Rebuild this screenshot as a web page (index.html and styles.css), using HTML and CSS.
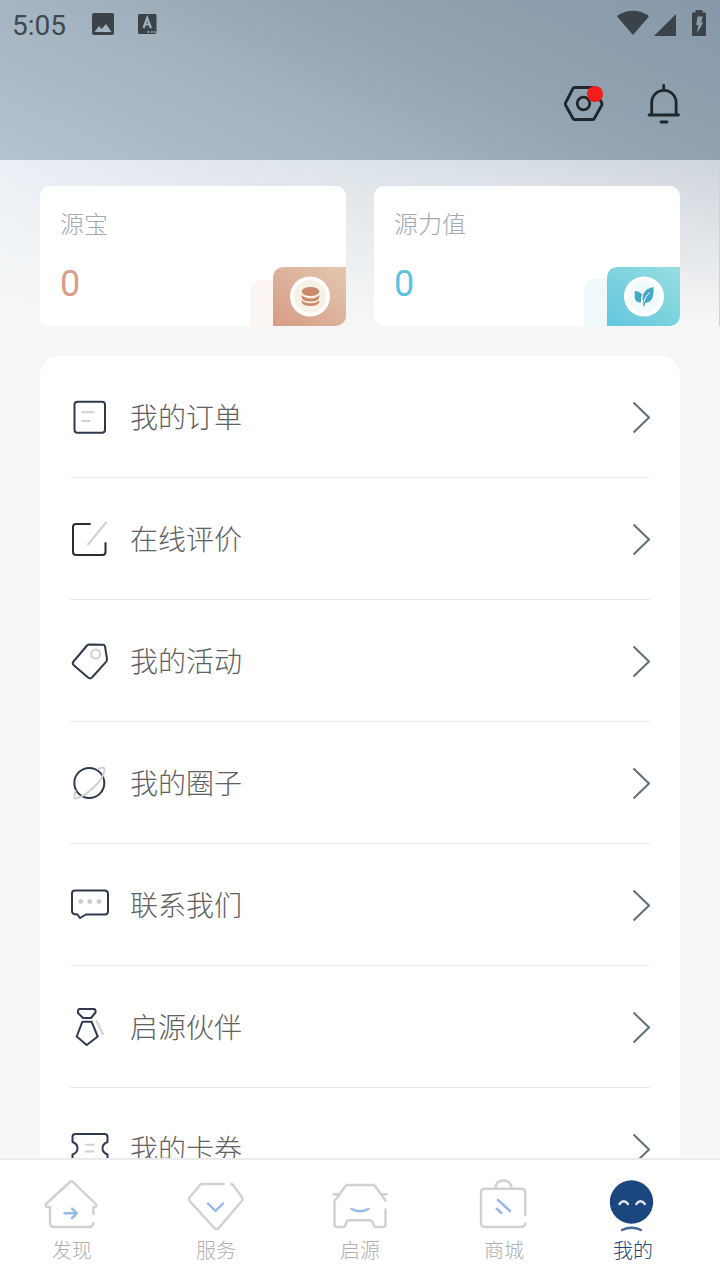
FILE: index.html
```html
<!DOCTYPE html>
<html lang="zh-CN">
    <head>
        <meta charset="utf-8">
        <title>我的</title>
        <link rel="stylesheet" href="styles.css">
    </head>
    <body>
        <header class="top">
            <div class="status">
                <span class="time">5:05</span>
                <svg class="status-left" width="68" height="26" viewBox="0 0 68 26">
                    <path fill-rule="evenodd" d="M3 1h18q2 0 2 2v18q0 2-2 2H3q-2 0-2-2V3q0-2 2-2zM3.500 20h17l-5.500-8-4.500 5-2.500-3z"/>
                    <rect x="47" y="2" width="18.500" height="20" rx="1.500"/>
                    <path class="cut" d="M52.500 16l3.700-10 3.700 10M53.500 12.500h5"/>
                    <path class="dots" d="M56.500 20h2M60 20h2M63 20h2"/>
                </svg>
                <svg class="status-right" width="92" height="30" viewBox="0 0 92 30">
                    <path d="M17 27L1.500 9q-.5-1.200.7-2Q17-1.500 31.800 7q1.200.8.700 2zM38.500 27.500L60 6v21.500q0 .5-.5.500H39q-1 0-.5-.5z"/>
                    <path d="M79.500 2h7v2.500H89q1 0 1 1V27q0 1-1 1H77q-1 0-1-1V5.500q0-1 1-1h2.500z"/>
                    <path class="bolt" d="M81.500 8.500h5.200l-1.500 6h2L81 25.500l1.200-8.500h-2z"/>
                </svg>
            </div>
            <div class="actions">
                <svg width="44" height="44" viewBox="0 0 44 44">
                    <path d="M12.500 5.500h18.300q1 0 1.500 1L39.800 21q.5 1 0 2l-7.500 13.500q-.5 1-1.500 1H12.500q-1 0-1.500-1L3.500 23q-.5-1 0-2L11 6.500q.5-1 1.500-1z"/>
                    <circle cx="21.500" cy="21.500" r="6.300"/>
                    <circle class="badge" cx="33" cy="12" r="8"/>
                </svg>
                <svg width="44" height="44" viewBox="0 0 44 44">
                    <path d="M9.700 32V20.500a12.200 12.200 0 0 1 24.400 0V32M7 33h29.500M21.700 3.500V8M19 40h6"/>
                </svg>
            </div>
        </header>

        <main class="content">
            <section class="stats">
                <div class="stat gold">
                    <p class="stat-name">源宝</p>
                    <p class="stat-num">0</p>
                    <svg class="stat-icon" width="96" height="60" viewBox="0 0 96 60">
                        <defs>
                            <linearGradient id="goldFill" x1="0" y1="1" x2="1" y2="0">
                                <stop offset="0" stop-color="#d69b86"/>
                                <stop offset="1" stop-color="#e3c8ae"/>
                            </linearGradient>
                        </defs>
                        <path fill="#fbf5f3" d="M0 60V27q0-13 13-13h20v46z"/>
                        <path fill="url(#goldFill)" d="M23 60V13Q23 1 35 1h61v59z"/>
                        <circle cx="60" cy="30.500" r="20" fill="#fff"/>
                        <circle cx="60" cy="30.500" r="16.300" fill="#f8f1e6"/>
                        <g fill="#cb8a6c">
                            <ellipse cx="60.500" cy="25.500" rx="8.800" ry="4.600"/>
                            <path d="M51.700 29q3 3.400 8.800 3.400t8.800-3.400v2.500q-1 4-8.800 4t-8.800-4zM51.700 34.200q3 3 8.800 3t8.800-3V36q-1 4-8.800 4t-8.800-4z"/>
                        </g>
                    </svg>
                </div>
                <div class="stat teal">
                    <p class="stat-name">源力值</p>
                    <p class="stat-num">0</p>
                    <svg class="stat-icon" width="96" height="60" viewBox="0 0 96 60">
                        <defs>
                            <linearGradient id="tealFill" x1="0" y1="1" x2="1" y2="0">
                                <stop offset="0" stop-color="#61c6de"/>
                                <stop offset="1" stop-color="#97dfe0"/>
                            </linearGradient>
                        </defs>
                        <path fill="#eff9fc" d="M0 60V26q0-13 13-13h20v47z"/>
                        <path fill="url(#tealFill)" d="M23 60V13Q23 1 35 1h61v59z"/>
                        <circle cx="60" cy="30.500" r="20" fill="#fff"/>
                        <circle cx="60" cy="30.500" r="16.300" fill="#f1fafd"/>
                        <path fill="#43a9c6" d="M50.700 25q5 .3 7.300 3.300-1.500 4-1 8.200-6.500 0-6.300-6zM69.500 21q1 16-8.500 15.800l-.7 3.400h-1.300l.3-3.700Q56 24 69.500 21z"/>
                        <path fill="none" stroke="#f1fafd" stroke-width="1" d="M60 36q1-6.500 6-9.500"/>
                    </svg>
                </div>
            </section>

            <ul class="menu">
                <li>
                    <svg class="icon" viewBox="0 0 40 40">
                        <rect x="4.500" y="4.800" width="30.500" height="31" rx="3"/>
                        <path class="soft" d="M12 15.200h11.500M12 24h7.500"/>
                    </svg>
                    <span>我的订单</span>
                    <svg class="arrow" viewBox="0 0 20 34"><path d="M3.500 2.500L19 17.500l-15.500 15"/></svg>
                </li>
                <li>
                    <svg class="icon black" viewBox="0 0 40 40">
                        <path d="M20 5H6Q3 5 3 8v25q0 3 3 3h26.500q3 0 3-3v-9"/>
                        <path class="soft" d="M36 3.500l-18 22"/>
                    </svg>
                    <span>在线评价</span>
                    <svg class="arrow" viewBox="0 0 20 34"><path d="M3.500 2.500L19 17.500l-15.500 15"/></svg>
                </li>
                <li>
                    <svg class="icon" viewBox="0 0 40 40">
                        <path d="M17 4.500q1-1 2.500-1l13.500.3q1.500 0 2 1.500L37 18q.2 1.500-.7 2.700L22 36.500q-2 1.700-4 0L3.500 24q-1.500-1.700 0-3.500z"/>
                        <circle class="soft" cx="25.700" cy="13" r="4.500"/>
                    </svg>
                    <span>我的活动</span>
                    <svg class="arrow" viewBox="0 0 20 34"><path d="M3.500 2.500L19 17.500l-15.500 15"/></svg>
                </li>
                <li>
                    <svg class="icon" viewBox="0 0 40 40">
                        <circle cx="19.300" cy="20" r="15"/>
                        <path class="soft" d="M28 6q7-3 6.500 1-.5 7-9 15.500Q14 34 6 35.500q-3 0-.5-7.500"/>
                    </svg>
                    <span>我的圈子</span>
                    <svg class="arrow" viewBox="0 0 20 34"><path d="M3.500 2.500L19 17.500l-15.500 15"/></svg>
                </li>
                <li>
                    <svg class="icon" viewBox="0 0 40 40">
                        <path d="M5 5.500h29.500q3.500 0 3.500 3.500v17q0 3.500-3.500 3.500H16L10 33l-2.500-3.500Q2 29.500 2 26V8.500q0-3 3-3z"/>
                        <g class="dot">
                            <circle cx="10.700" cy="16.500" r="2.400"/>
                            <circle cx="19.700" cy="16.500" r="2.400"/>
                            <circle cx="29" cy="16.500" r="2.400"/>
                        </g>
                    </svg>
                    <span>联系我们</span>
                    <svg class="arrow" viewBox="0 0 20 34"><path d="M3.500 2.500L19 17.500l-15.500 15"/></svg>
                </li>
                <li>
                    <svg class="icon" viewBox="0 0 40 40">
                        <path d="M10 2h13.500q2 0 2 2v1.500L21 11h-8L8 6V4q0-2 2-2zM12.300 14.800h9.400l6 14.700-11 8.500-10-8.500z"/>
                        <path class="soft" d="M26.500 14L33 27"/>
                    </svg>
                    <span>启源伙伴</span>
                    <svg class="arrow" viewBox="0 0 20 34"><path d="M3.500 2.500L19 17.500l-15.500 15"/></svg>
                </li>
                <li>
                    <svg class="icon" viewBox="0 0 40 40">
                        <path d="M5.500 5h29q3 0 3 3v5q-5 2-5 6.200t5 6.300v7q0 3-3 3h-29q-3 0-3-3v-7q5-2 5-6.300T2.500 13V8q0-3 3-3z"/>
                        <path class="soft" d="M16 15.800h7.800M16 22.600h7.800"/>
                    </svg>
                    <span>我的卡券</span>
                    <svg class="arrow" viewBox="0 0 20 34"><path d="M3.500 2.500L19 17.500l-15.500 15"/></svg>
                </li>
            </ul>
        </main>

        <nav class="tabs">
            <a class="tab">
                <svg viewBox="0 0 60 60">
                    <path d="M51.300 39v-7h1.500q2.500-1 1-3L31 7q-1.500-1.300-3 0L4 29q-1.500 2 1 3h3v16q0 4 4 4h35q4 0 4.500-4"/>
                    <path class="blue" d="M22.500 38.300h12M30 33.500l4.700 4.800-4.700 4.800"/>
                </svg>
                <span>发现</span>
            </a>
            <a class="tab">
                <svg viewBox="0 0 60 60">
                    <path d="M37.500 9H17q-2 0-3 1L3.500 22.500q-1 1.700 0 3.300l24.500 27q2.500 2.500 5 0l23-27q1.200-1.700 0-3.500L47.500 10.500q-.8-1-2.200-1.500"/>
                    <path class="blue" d="M22 28.500l7.500 7.500 7.500-7.500"/>
                </svg>
                <span>服务</span>
            </a>
            <a class="tab">
                <svg viewBox="0 0 60 60">
                    <path d="M55.500 25.500L45 11q-.7-1-2-1H17.500q-1.300 0-2 1L4.500 26v23.500q0 2.500 2.500 2.500h6q2 0 2.500-2l1-3q.5-1.700 2.500-1.700h21q2 0 2.500 1.700l1 3q.5 2 2.500 2h7q2.500 0 2.500-2.500v-15M3.700 19.300H10M51 19.300h5.500"/>
                    <path class="blue" d="M21.500 34q8.500 4.500 17 0"/>
                </svg>
                <span>启源</span>
            </a>
            <a class="tab">
                <svg viewBox="0 0 60 60">
                    <path d="M51.300 40V17.500q0-3.800-3.800-3.800H11q-4 0-4 3.800V48q0 4 4 4h36q3.500 0 4.300-3.500M21.300 13q1-7.500 8-7.500t8.500 7.500"/>
                    <path class="blue" d="M24 25l12 11M22.700 33.700l4.600 4.300"/>
                </svg>
                <span>商城</span>
            </a>
            <a class="tab active">
                <svg viewBox="0 0 60 60">
                    <circle class="face" cx="28.500" cy="27" r="21.700"/>
                    <path class="eyes" d="M16.500 29q4.200-5.500 8.500 0M33.300 29q4.200-5.500 8.500 0"/>
                    <path class="mouth" d="M19 55q9.500-4.500 19 0"/>
                </svg>
                <span>我的</span>
            </a>
        </nav>
    </body>
</html>
```
FILE: styles.css
```css
* {
    box-sizing: border-box;
}
body {
    margin: 0;
    height: 1280px;
    display: flex;
    flex-direction: column;
    overflow: hidden;
    background-color: #f7f7f7;
    font-family: "Noto Sans CJK SC", sans-serif;
    font-weight: 300;
}
p, ul {
    margin: 0;
    padding: 0;
}
svg {
    display: block;
    flex: none;
}

/* header */
.top {
    flex: 0 0 160px;
    background: linear-gradient(25deg, #b4c3cf 0%, #a2b2bf 38%, #90a1af 68%, #8798a9 100%);
}
.status {
    height: 50px;
    display: flex;
    align-items: center;
    padding: 0 12px;
    fill: #3b4349;
}
.time {
    font: 400 28px/50px Roboto, sans-serif;
    color: #3f4a50;
    width: 79px;
    padding-top: 2px;
}
.status-right {
    margin-left: auto;
    margin-top: -5px;
}
.cut {
    fill: none;
    stroke: #9fafbb;
    stroke-width: 2.2;
}
.dots {
    stroke: #9fafbb;
    stroke-width: 1.5;
}
.bolt {
    fill: #8b9bab;
}
.actions {
    display: flex;
    justify-content: flex-end;
    gap: 36px;
    padding: 32px 34px 0 0;
    fill: none;
    stroke: #202629;
    stroke-width: 2.8;
    stroke-linecap: round;
}
.actions .badge {
    fill: #f41d1d;
    stroke: none;
}

.content {
    flex: 1;
    min-height: 0;
    overflow: hidden;
}

/* point cards */
.stats {
    height: 166px;
    display: flex;
    gap: 28px;
    padding: 26px 39px 0 40px;
    border-right: 1px solid #c9d4dc;
    background:
        linear-gradient(to bottom, rgba(247, 247, 247, 0), #f7f7f7),
        linear-gradient(to right, #eaf0f5 0%, #e3eaf0 20%, #dce4e8 48%, #d8e0e7 65%, #ced5dc 100%);
}
.stat {
    flex: 1;
    height: 140px;
    position: relative;
    overflow: hidden;
    padding: 20px;
    background-color: #fff;
    border-radius: 10px;
}
.stat-name {
    font-size: 24px;
    line-height: 34px;
    color: #9fa9af;
}
.stat-num {
    margin-top: 23px;
    font: 400 36px/42px Roboto, sans-serif;
}
.gold .stat-num {
    color: #d99e89;
}
.teal .stat-num {
    color: #5bc2dc;
}
.stat-icon {
    position: absolute;
    right: 0;
    bottom: 0;
}

/* menu list */
.menu {
    list-style: none;
    margin: 30px 40px 0;
    padding: 0 30px;
    background-color: #fff;
    border-radius: 20px 20px 0 0;
}
.menu li {
    height: 122px;
    display: flex;
    align-items: center;
    border-bottom: 1px solid #ebebeb;
    font-size: 28px;
    color: #606060;
}
.menu span {
    flex: 1;
    margin-left: 20px;
    padding-bottom: 1px;
}
.icon {
    width: 40px;
    height: 40px;
    fill: none;
    stroke: #2f394e;
    stroke-width: 2;
    stroke-linecap: round;
    stroke-linejoin: round;
}
.black {
    stroke: #2d2d2d;
}
.icon .soft {
    stroke: #d0d0d6;
}
.icon .dot {
    fill: #cbcbd2;
    stroke: none;
}
.arrow {
    width: 20px;
    height: 34px;
    fill: none;
    stroke: #5f707b;
    stroke-width: 2;
}

/* bottom tabs */
.tabs {
    flex: 0 0 122px;
    display: flex;
    background-color: #fff;
    border-top: 2px solid #ebebeb;
}
.tab {
    flex: 0 0 144px;
    display: flex;
    flex-direction: column;
    align-items: center;
    padding-top: 15px;
    font-size: 20px;
    line-height: 30px;
    color: #aeaeae;
}
.tab svg {
    width: 60px;
    height: 60px;
    fill: none;
    stroke: #d0d0d5;
    stroke-width: 2.4;
    stroke-linecap: round;
    stroke-linejoin: round;
}
.tab .blue {
    stroke: #94b8e8;
}
.active {
    padding-right: 30px;
    color: #1c477e;
}
.active .face {
    fill: #1c477e;
    stroke: none;
}
.active .eyes {
    stroke: #e3e8f0;
}
.active .mouth {
    stroke: #416898;
}
```
